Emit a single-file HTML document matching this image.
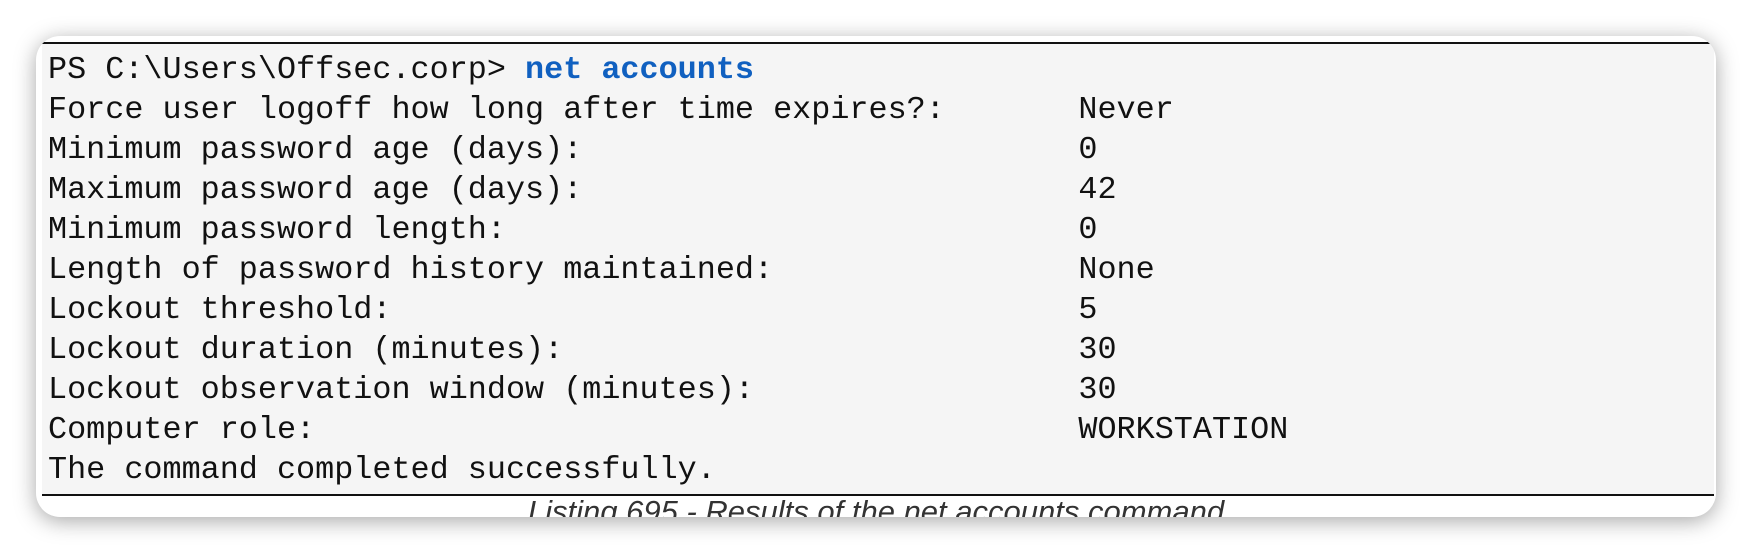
<!DOCTYPE html>
<html><head><style>
html,body{margin:0;padding:0;background:#fff;width:1752px;height:554px;overflow:hidden}
.card{position:absolute;left:36px;top:36px;width:1680px;height:481px;background:#fff;border-radius:24px;box-shadow:0 4px 22px rgba(0,0,0,0.35);overflow:hidden}
.code{position:absolute;left:6px;right:2px;top:6px;height:454px;background:#f5f5f5;border-top:2px solid #111;border-bottom:2px solid #111;box-sizing:border-box}
pre{margin:0;padding:6px 0 0 6px;font-family:"Liberation Mono",monospace;font-size:31.8px;line-height:40px;color:#111}
b{color:#1060c0}
.cap{position:absolute;left:0;right:0;top:460px;text-align:center;font-family:"Liberation Sans",sans-serif;font-style:italic;font-size:31px;color:#333;line-height:32px}
</style></head><body>
<div class="card">
<div class="code"><pre>PS C:\Users\Offsec.corp&gt; <b>net accounts</b>
Force user logoff how long after time expires?:       Never
Minimum password age (days):                          0
Maximum password age (days):                          42
Minimum password length:                              0
Length of password history maintained:                None
Lockout threshold:                                    5
Lockout duration (minutes):                           30
Lockout observation window (minutes):                 30
Computer role:                                        WORKSTATION
The command completed successfully.</pre></div>
<div class="cap">Listing 695 - Results of the net accounts command</div>
</div>
</body></html>
